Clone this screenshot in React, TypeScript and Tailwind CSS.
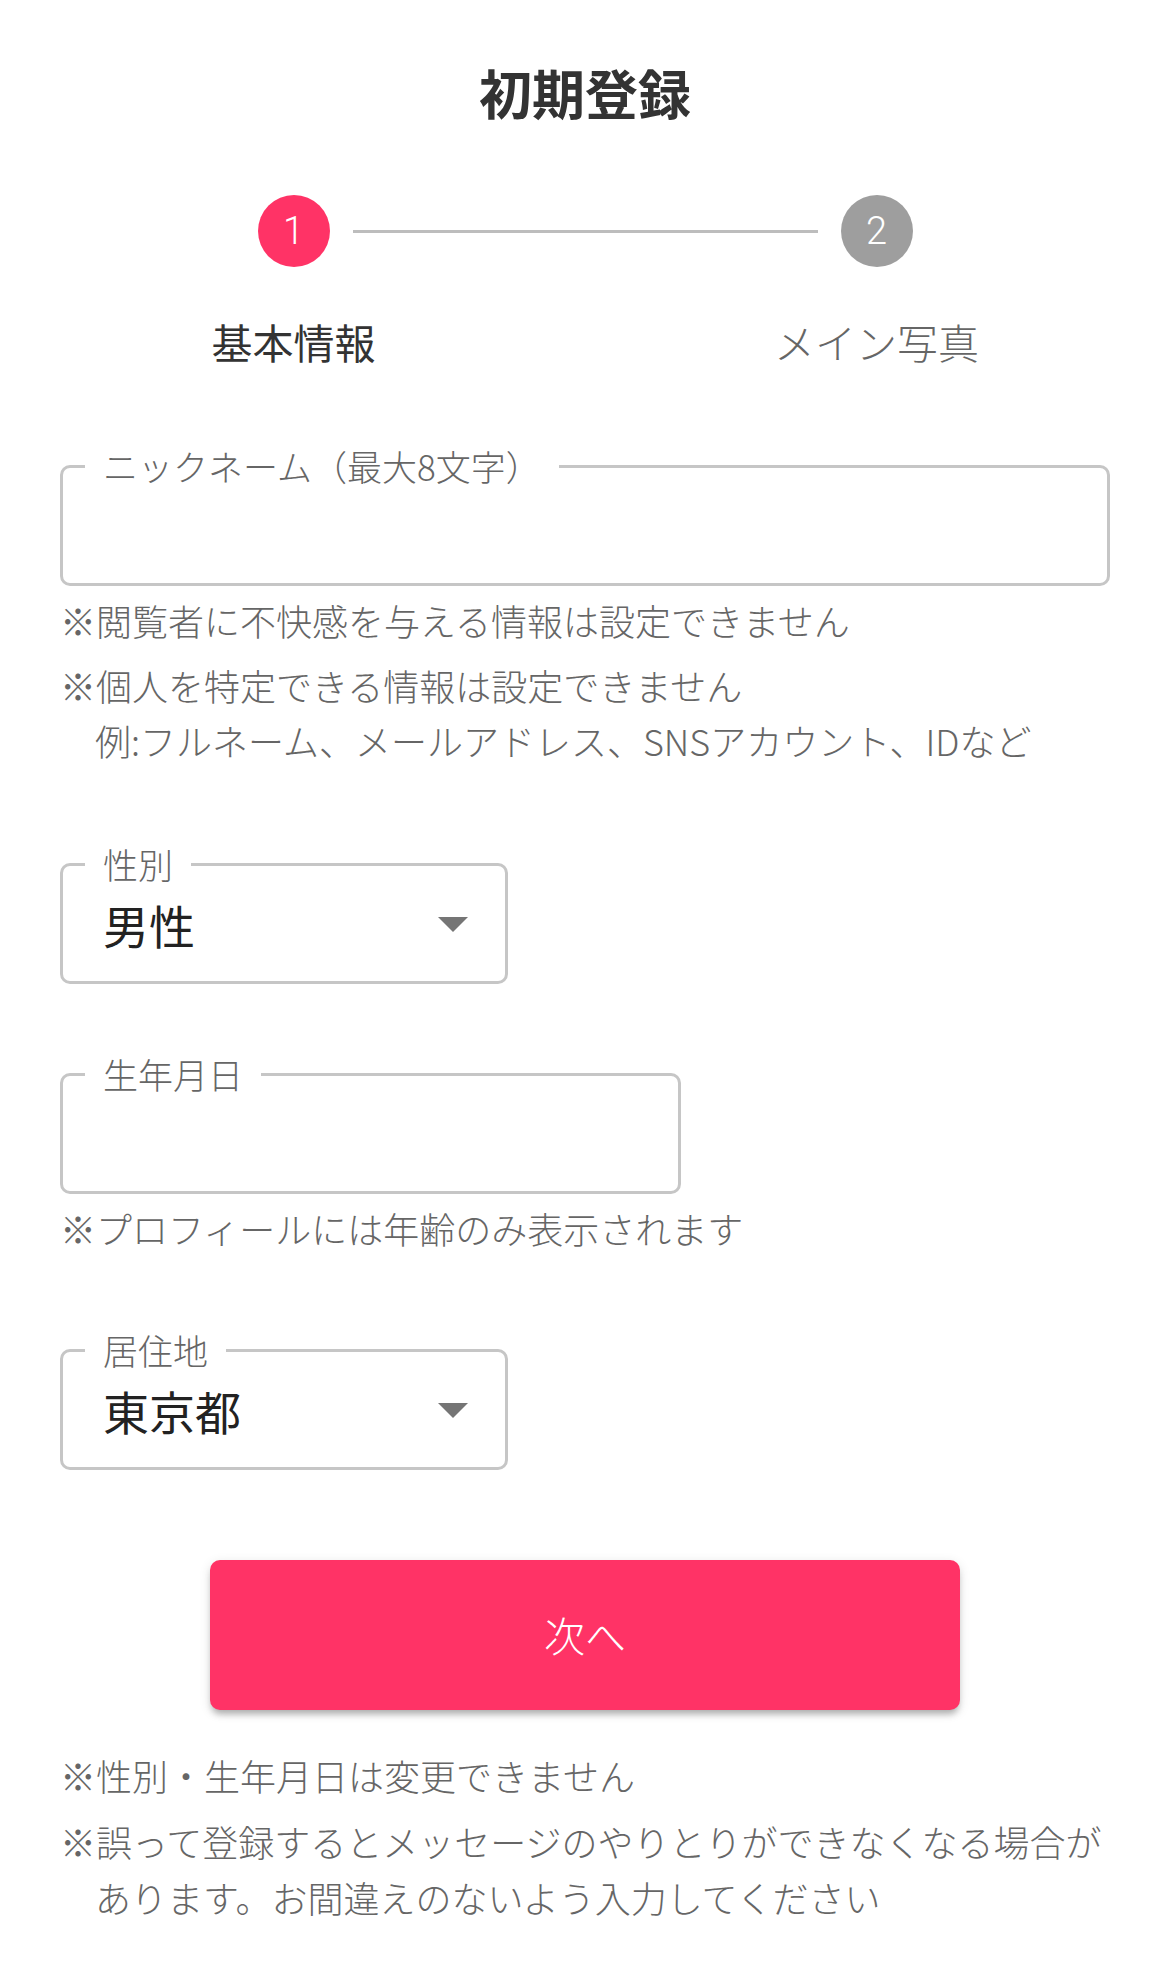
import React from "react";

const jp = "font-['Noto_Sans_CJK_JP',sans-serif]";

function Arrow() {
  return (
    <svg width="30" height="15" viewBox="0 0 30 15" className="shrink-0">
      <polygon points="0,0 30,0 15,15" fill="#757575" />
    </svg>
  );
}

function Outlined({
  label,
  width,
  children,
  className = "",
}: {
  label: string;
  width: string;
  children?: React.ReactNode;
  className?: string;
}) {
  return (
    <fieldset
      className={`${width} ${className} rounded-[10px] border-[3px] border-[#c6c6c6]`}
    >
      <legend className="ml-[22px] px-[18px] text-[35px] font-light leading-[34px] text-[#666]">
        {label}
      </legend>
      <div className="h-[100px]">{children}</div>
    </fieldset>
  );
}

function SelectValue({ value }: { value: string }) {
  return (
    <div className="flex h-full items-center justify-between pb-[14px] pl-[40px] pr-[37px]">
      <span className="text-[46px] leading-none text-[#222]">{value}</span>
      <Arrow />
    </div>
  );
}

export default function App() {
  return (
    <div className={`${jp} min-h-[1965px] bg-white px-[60px] pt-[60px] pb-[38px]`}>
      {/* title */}
      <h1 className="text-center text-[53px] font-bold leading-[64px] text-[#333]">初期登録</h1>

      {/* stepper */}
      <div className="mt-[71px] flex items-center justify-center gap-[23px]">
        <div className="flex h-[72px] w-[72px] items-center justify-center rounded-full bg-[#ff3366] font-['Roboto',sans-serif] text-[38px] font-light text-white">
          1
        </div>
        <div className="h-[3px] w-[465px] bg-[#bdbdbd]" />
        <div className="flex h-[72px] w-[72px] items-center justify-center rounded-full bg-[#9e9e9e] font-['Roboto',sans-serif] text-[38px] font-light text-white">
          2
        </div>
      </div>
      <div className="mt-[49px] flex justify-center gap-[283px] text-[41px] leading-[50px]">
        <span className="w-[300px] text-center text-[#333]">基本情報</span>
        <span className="w-[300px] text-center font-light text-[#666]">メイン写真</span>
      </div>

      {/* nickname */}
      <Outlined label="ニックネーム（最大8文字）" width="w-full" className="mt-[83px]" />
      <div className="mt-[6px] text-[36px] font-light text-[#666]">
        <p className="leading-[56px]">※閲覧者に不快感を与える情報は設定できません</p>
        <p className="mt-[10px] leading-[55px]">
          <span className="block">※個人を特定できる情報は設定できません</span>
          <span className="block pl-[35px]">例:フルネーム、メールアドレス、SNSアカウント、IDなど</span>
        </p>
      </div>

      {/* gender */}
      <Outlined label="性別" width="w-[448px]" className="mt-[79px]">
        <SelectValue value="男性" />
      </Outlined>

      {/* birthday */}
      <Outlined label="生年月日" width="w-[621px]" className="mt-[73px]" />
      <p className="mt-[6px] text-[36px] font-light leading-[56px] text-[#666]">※プロフィールには年齢のみ表示されます</p>

      {/* residence */}
      <Outlined label="居住地" width="w-[448px]" className="mt-[77px]">
        <SelectValue value="東京都" />
      </Outlined>

      {/* next */}
      <button className="mx-auto mt-[90px] flex h-[150px] w-[750px] items-center justify-center rounded-[10px] bg-[#ff3366] text-[41px] font-light text-white shadow-[0_6px_6px_-2px_rgba(0,0,0,0.25),0_3px_12px_rgba(0,0,0,0.12)]">
        次へ
      </button>

      <div className="mt-[37px] text-[36px] font-light text-[#666]">
        <p className="leading-[56px]">※性別・生年月日は変更できません</p>
        <p className="mt-[10px] leading-[56px]">
          <span className="block">※誤って登録するとメッセージのやりとりができなくなる場合が</span>
          <span className="block pl-[35px]">あります。お間違えのないよう入力してください</span>
        </p>
      </div>
    </div>
  );
}
